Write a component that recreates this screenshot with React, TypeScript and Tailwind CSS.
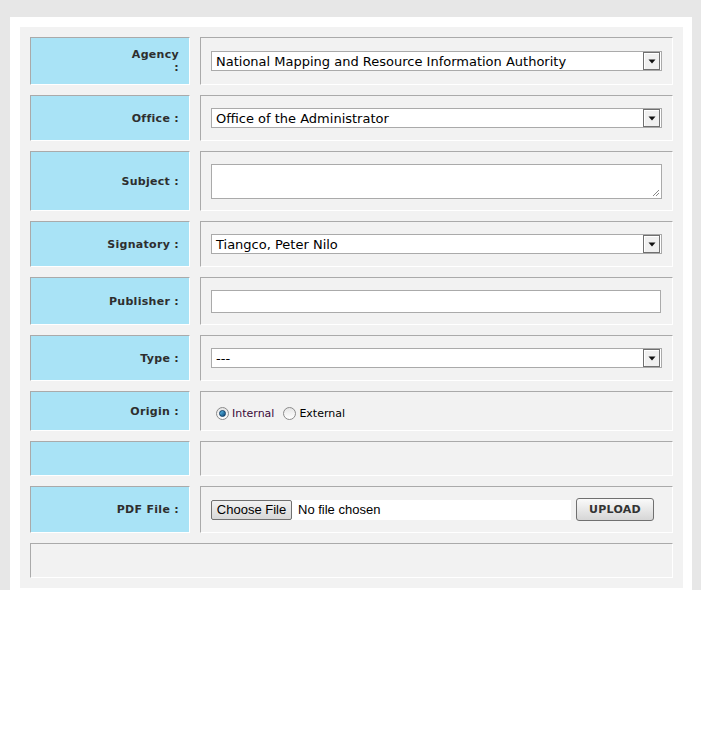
import React from 'react';

const CELL_BORDER = 'border-t border-l border-r border-b border-t-[#aaaaaa] border-l-[#aaaaaa] border-r-white border-b-white';

function Label({ children, h }: { children: React.ReactNode; h: string }) {
  return (
    <div
      className={`${CELL_BORDER} ${h} w-[160px] shrink-0 bg-[#a9e3f6] flex items-center justify-end pr-[10px] text-right text-[11px] font-bold leading-[13px] tracking-[0.3px] text-[#2e2e2e]`}
    >
      <div>{children}</div>
    </div>
  );
}

function Value({ children, h }: { children?: React.ReactNode; h: string }) {
  return (
    <div className={`${CELL_BORDER} ${h} flex-1 bg-[#f2f2f2] flex items-center pl-[10px] pr-[10px]`}>
      {children}
    </div>
  );
}

function FakeSelect({ text }: { text: string }) {
  return (
    <div className="w-[451px] h-[20px] border border-[#aaaaaa] bg-white flex items-center justify-between">
      <span className="pl-[4px] text-[13px] leading-none text-black">{text}</span>
      <span className="mr-[1px] w-[17px] h-[18px] border border-[#707070] bg-[#f0f0f0] flex items-center justify-center shadow-[inset_1px_1px_0_#ffffff]">
        <svg width="8" height="5" viewBox="0 0 8 5">
          <path d="M0.5 0.5 H7.5 L4 4.5 Z" fill="#111111" />
        </svg>
      </span>
    </div>
  );
}

function Radio({ checked }: { checked?: boolean }) {
  return (
    <span className="w-[13px] h-[13px] rounded-full border border-[#8a8a8a] bg-gradient-to-b from-[#e6e6e6] to-[#ffffff] flex items-center justify-center">
      {checked && (
        <span className="w-[7px] h-[7px] rounded-full bg-gradient-to-br from-[#5fc2f0] to-[#0b4a7a] border border-[#0d3d66]" />
      )}
    </span>
  );
}

export default function App() {
  return (
    <div className="min-h-screen bg-white" style={{ fontFamily: '"DejaVu Sans", Verdana, sans-serif' }}>
      <div className="bg-[#e7e7e7] pt-[17px] pl-[10px] pr-[9px]">
        <div className="bg-white pt-[10px] pl-[10px] pr-[9px] pb-[2px]">
          <div className="bg-[#f2f2f2] p-[10px] flex flex-col gap-[10px]">
            <div className="flex gap-[10px]">
              <Label h="h-[48px]">
                Agency
                <br />:
              </Label>
              <Value h="h-[48px]">
                <FakeSelect text="National Mapping and Resource Information Authority" />
              </Value>
            </div>

            <div className="flex gap-[10px]">
              <Label h="h-[46px]">Office :</Label>
              <Value h="h-[46px]">
                <FakeSelect text="Office of the Administrator" />
              </Value>
            </div>

            <div className="flex gap-[10px]">
              <Label h="h-[60px]">Subject :</Label>
              <Value h="h-[60px]">
                <div className="relative w-[451px] h-[35px] border border-[#aaaaaa] bg-white">
                  <svg className="absolute right-[1px] bottom-[1px]" width="9" height="9" viewBox="0 0 9 9">
                    <path d="M8 2 L2 8 M8 5 L5 8" stroke="#888888" strokeWidth="1" />
                  </svg>
                </div>
              </Value>
            </div>

            <div className="flex gap-[10px]">
              <Label h="h-[46px]">Signatory :</Label>
              <Value h="h-[46px]">
                <FakeSelect text="Tiangco, Peter Nilo" />
              </Value>
            </div>

            <div className="flex gap-[10px]">
              <Label h="h-[48px]">Publisher :</Label>
              <Value h="h-[48px]">
                <div className="w-[450px] h-[23px] border border-[#aaaaaa] bg-white" />
              </Value>
            </div>

            <div className="flex gap-[10px]">
              <Label h="h-[46px]">Type :</Label>
              <Value h="h-[46px]">
                <FakeSelect text="---" />
              </Value>
            </div>

            <div className="flex gap-[10px]">
              <Label h="h-[40px]">Origin :</Label>
              <Value h="h-[40px]">
                <div className="flex items-center pl-[5px] pt-[4px] text-[11px] text-black">
                  <Radio checked />
                  <span className="ml-[3px] mr-[9px] pt-[2px] text-[#3a0a3a]">Internal</span>
                  <Radio />
                  <span className="ml-[3px] pt-[2px]">External</span>
                </div>
              </Value>
            </div>

            <div className="flex gap-[10px]">
              <Label h="h-[35px]">{''}</Label>
              <Value h="h-[35px]" />
            </div>

            <div className="flex gap-[10px]">
              <Label h="h-[47px]">PDF File :</Label>
              <Value h="h-[47px]">
                <div className="flex items-center" style={{ fontFamily: '"Liberation Sans", Arial, sans-serif' }}>
                  <div className="w-[360px] h-[20px] bg-white flex items-center">
                    <span className="h-[20px] w-[81px] rounded-[2px] border border-[#707070] bg-gradient-to-b from-[#f2f2f2] to-[#d8d8d8] flex items-center justify-center text-[13px] text-black">
                      Choose File
                    </span>
                    <span className="ml-[6px] text-[13px] text-black">No file chosen</span>
                  </div>
                  <span
                    className="ml-[5px] w-[78px] h-[23px] pt-[2px] rounded-[3px] border border-[#707070] bg-gradient-to-b from-[#fafafa] to-[#d6d6d6] flex items-center justify-center text-[11px] font-bold tracking-[0.3px] text-[#333333]"
                    style={{ fontFamily: '"DejaVu Sans", Verdana, sans-serif' }}
                  >
                    UPLOAD
                  </span>
                </div>
              </Value>
            </div>

            <div className={`${CELL_BORDER} h-[35px] bg-[#f2f2f2]`} />
          </div>
        </div>
      </div>
    </div>
  );
}
